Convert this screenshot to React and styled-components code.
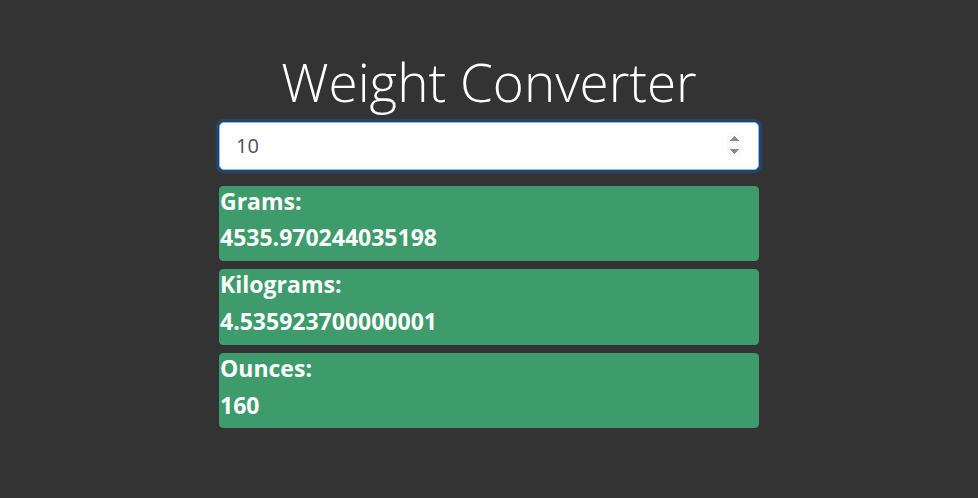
import React, { useState } from 'react'
import styled, { createGlobalStyle } from 'styled-components'

const GlobalStyle = createGlobalStyle`
  * { box-sizing: border-box; }
  body {
    margin: 0;
    background: #333333;
    font-family: "Open Sans", "Noto Sans", sans-serif;
  }
`

export default function App () {
  const [lbs, setLbs] = useState('10')
  const n = Number(lbs)
  const results = [
    { label: 'Grams:', value: String(n / 0.0022046) },
    { label: 'Kilograms:', value: String(n * 0.45359237) },
    { label: 'Ounces:', value: String(n * 16) }
  ]

  return (
    <>
      <GlobalStyle />
      <Container>
        <Title>Weight Converter</Title>
        <Input
          type='number'
          value={lbs}
          autoFocus
          onChange={e => setLbs(e.target.value)}
        />
        {results.map(r => (
          <Card key={r.label}>
            <CardText>{r.label}</CardText>
            <CardText>{r.value}</CardText>
          </Card>
        ))}
      </Container>
    </>
  )
}

/*
Styles
 */

const Container = styled.div`
  width: 540px;
  margin: 0 auto;
  padding-top: 50px;
  display: flex;
  flex-direction: column;
`

const Title = styled.h1`
  margin: 0 0 8px;
  font-size: 53px;
  font-weight: 300;
  line-height: 1.2;
  color: #ffffff;
  text-align: center;
`

const Input = styled.input`
  height: 48px;
  padding: 8px 16px;
  margin-bottom: 16px;
  font-family: "Open Sans", sans-serif;
  font-size: 20px;
  color: #495057;
  background: #ffffff;
  border: 1px solid #80bdff;
  border-radius: 5px;
  box-shadow: 0 0 0 3.2px rgba(0, 123, 255, 0.25);
  outline: none;
`

const Card = styled.div`
  background: #3e9b6c;
  border: 1px solid #3e9b6c;
  border-radius: 4px;
  margin-bottom: 8px;
  display: flex;
  flex-direction: column;
`

const CardText = styled.h4`
  margin: 0 0 8px;
  font-size: 23px;
  font-weight: 700;
  line-height: 28.8px;
  color: #ffffff;
`
